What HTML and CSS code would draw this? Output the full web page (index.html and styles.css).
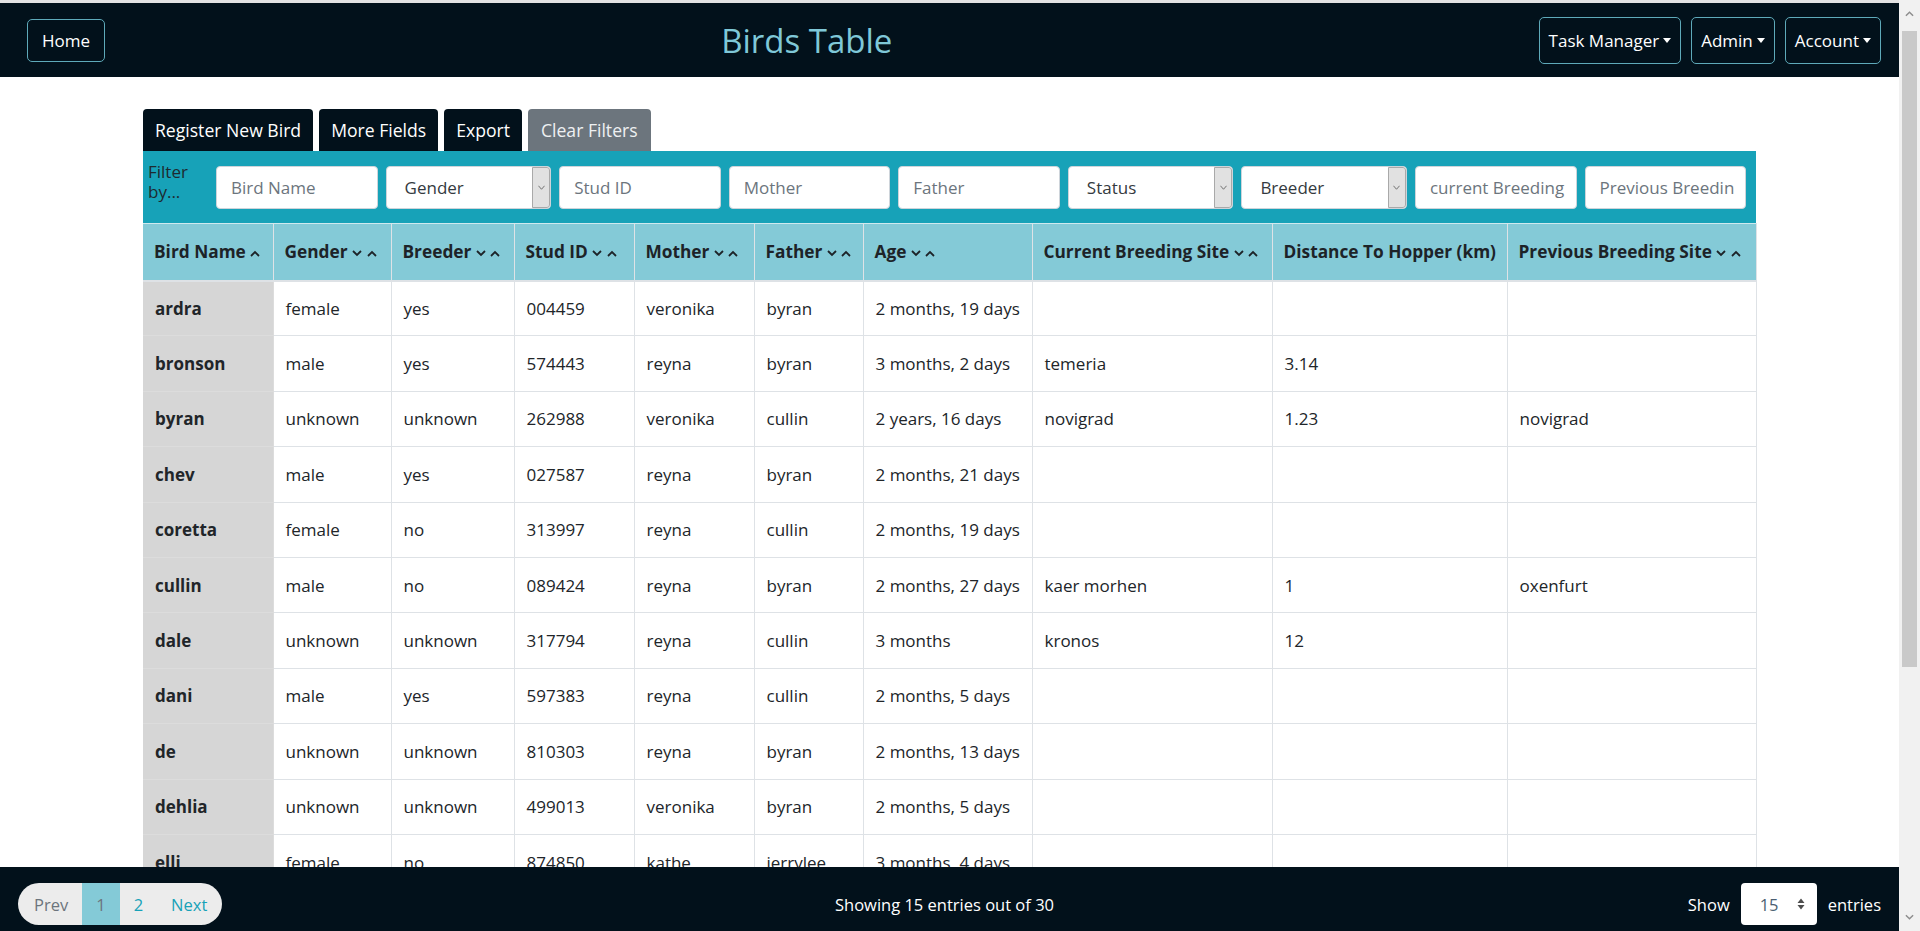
FILE: index.html
```html
<!DOCTYPE html>
<html lang="en">
<head>
<meta charset="utf-8">
<title>Birds Table</title>
<link rel="stylesheet" href="styles.css">
</head>
<body>
<div class="app">
  <div class="viewport">
    <div class="topstrip"></div>
    <nav class="navbar">
      <a class="nav-btn home" href="#">Home</a>
      <h1 class="title">Birds Table</h1>
      <div class="nav-right">
        <button class="nav-btn">Task Manager<span class="caret"></span></button>
        <button class="nav-btn">Admin<span class="caret"></span></button>
        <button class="nav-btn">Account<span class="caret"></span></button>
      </div>
    </nav>

    <main class="content">
      <div class="wrap">
        <div class="actions">
          <button class="act dark">Register New Bird</button>
          <button class="act dark">More Fields</button>
          <button class="act dark">Export</button>
          <button class="act grey">Clear Filters</button>
        </div>

        <div class="filters">
          <div class="filter-label">Filter by...</div>
          <div class="field input"><span class="ph">Bird Name</span></div>
          <div class="field select"><span class="val">Gender</span><span class="arrow"><svg viewBox="0 0 8 5"><path d="M.5.5l3.5 4 3.5-4"/></svg></span></div>
          <div class="field input"><span class="ph">Stud ID</span></div>
          <div class="field input"><span class="ph">Mother</span></div>
          <div class="field input"><span class="ph">Father</span></div>
          <div class="field select"><span class="val">Status</span><span class="arrow"><svg viewBox="0 0 8 5"><path d="M.5.5l3.5 4 3.5-4"/></svg></span></div>
          <div class="field select"><span class="val">Breeder</span><span class="arrow"><svg viewBox="0 0 8 5"><path d="M.5.5l3.5 4 3.5-4"/></svg></span></div>
          <div class="field input"><span class="ph">current Breeding</span></div>
          <div class="field input"><span class="ph">Previous Breedin</span></div>
        </div>

        <table class="birds">
          <colgroup>
            <col class="w-name"><col class="w-gender"><col class="w-breeder"><col class="w-stud"><col class="w-mother"><col class="w-father"><col class="w-age"><col class="w-cur"><col class="w-dist"><col class="w-prev">
          </colgroup>
          <thead>
            <tr>
              <th>Bird Name <svg class="sort" viewBox="0 0 10 7"><path d="M1 6l4-4 4 4"/></svg></th>
              <th>Gender <svg class="sort" viewBox="0 0 10 7"><path d="M1 1l4 4 4-4"/></svg> <svg class="sort" viewBox="0 0 10 7"><path d="M1 6l4-4 4 4"/></svg></th>
              <th>Breeder <svg class="sort" viewBox="0 0 10 7"><path d="M1 1l4 4 4-4"/></svg> <svg class="sort" viewBox="0 0 10 7"><path d="M1 6l4-4 4 4"/></svg></th>
              <th>Stud ID <svg class="sort" viewBox="0 0 10 7"><path d="M1 1l4 4 4-4"/></svg> <svg class="sort" viewBox="0 0 10 7"><path d="M1 6l4-4 4 4"/></svg></th>
              <th>Mother <svg class="sort" viewBox="0 0 10 7"><path d="M1 1l4 4 4-4"/></svg> <svg class="sort" viewBox="0 0 10 7"><path d="M1 6l4-4 4 4"/></svg></th>
              <th>Father <svg class="sort" viewBox="0 0 10 7"><path d="M1 1l4 4 4-4"/></svg> <svg class="sort" viewBox="0 0 10 7"><path d="M1 6l4-4 4 4"/></svg></th>
              <th>Age <svg class="sort" viewBox="0 0 10 7"><path d="M1 1l4 4 4-4"/></svg> <svg class="sort" viewBox="0 0 10 7"><path d="M1 6l4-4 4 4"/></svg></th>
              <th>Current Breeding Site <svg class="sort" viewBox="0 0 10 7"><path d="M1 1l4 4 4-4"/></svg> <svg class="sort" viewBox="0 0 10 7"><path d="M1 6l4-4 4 4"/></svg></th>
              <th>Distance To Hopper (km)</th>
              <th>Previous Breeding Site <svg class="sort" viewBox="0 0 10 7"><path d="M1 1l4 4 4-4"/></svg> <svg class="sort" viewBox="0 0 10 7"><path d="M1 6l4-4 4 4"/></svg></th>
            </tr>
          </thead>
          <tbody>
            <tr><td>ardra</td><td>female</td><td>yes</td><td>004459</td><td>veronika</td><td>byran</td><td>2 months, 19 days</td><td></td><td></td><td></td></tr>
            <tr><td>bronson</td><td>male</td><td>yes</td><td>574443</td><td>reyna</td><td>byran</td><td>3 months, 2 days</td><td>temeria</td><td>3.14</td><td></td></tr>
            <tr><td>byran</td><td>unknown</td><td>unknown</td><td>262988</td><td>veronika</td><td>cullin</td><td>2 years, 16 days</td><td>novigrad</td><td>1.23</td><td>novigrad</td></tr>
            <tr><td>chev</td><td>male</td><td>yes</td><td>027587</td><td>reyna</td><td>byran</td><td>2 months, 21 days</td><td></td><td></td><td></td></tr>
            <tr><td>coretta</td><td>female</td><td>no</td><td>313997</td><td>reyna</td><td>cullin</td><td>2 months, 19 days</td><td></td><td></td><td></td></tr>
            <tr><td>cullin</td><td>male</td><td>no</td><td>089424</td><td>reyna</td><td>byran</td><td>2 months, 27 days</td><td>kaer morhen</td><td>1</td><td>oxenfurt</td></tr>
            <tr><td>dale</td><td>unknown</td><td>unknown</td><td>317794</td><td>reyna</td><td>cullin</td><td>3 months</td><td>kronos</td><td>12</td><td></td></tr>
            <tr><td>dani</td><td>male</td><td>yes</td><td>597383</td><td>reyna</td><td>cullin</td><td>2 months, 5 days</td><td></td><td></td><td></td></tr>
            <tr><td>de</td><td>unknown</td><td>unknown</td><td>810303</td><td>reyna</td><td>byran</td><td>2 months, 13 days</td><td></td><td></td><td></td></tr>
            <tr><td>dehlia</td><td>unknown</td><td>unknown</td><td>499013</td><td>veronika</td><td>byran</td><td>2 months, 5 days</td><td></td><td></td><td></td></tr>
            <tr><td>elli</td><td>female</td><td>no</td><td>874850</td><td>kathe</td><td>jerrylee</td><td>3 months, 4 days</td><td></td><td></td><td></td></tr>
          </tbody>
        </table>
      </div>
    </main>

    <footer class="footer">
      <div class="pager">
        <span class="pg prev">Prev</span>
        <span class="pg active">1</span>
        <span class="pg link">2</span>
        <span class="pg link">Next</span>
      </div>
      <div class="showing">Showing 15 entries out of 30</div>
      <div class="per-page">
        <span>Show</span>
        <div class="num-select"><span class="num">15</span><svg viewBox="0 0 8 12"><path d="M4 0.5L7.5 5h-7z M4 11.5L0.5 7h7z"/></svg></div>
        <span>entries</span>
      </div>
    </footer>
  </div>

  <div class="scrollbar">
    <div class="sb-btn"><svg viewBox="0 0 10 6"><path d="M1 5l4-4 4 4"/></svg></div>
    <div class="sb-track"><div class="sb-thumb"></div></div>
    <div class="sb-btn"><svg viewBox="0 0 10 6"><path d="M1 1l4 4 4-4"/></svg></div>
  </div>
</div>
</body>
</html>
```

FILE: styles.css
```css
* { box-sizing: border-box; }

html, body {
  margin: 0;
  height: 100%;
  overflow: hidden;
}

body {
  font-family: "Open Sans", "Noto Sans", sans-serif;
  font-size: 17px;
  color: #212529;
  background: #fff;
}

.app {
  display: flex;
  height: 931px;
}

.viewport {
  flex: 1;
  display: flex;
  flex-direction: column;
  min-width: 0;
}

.topstrip {
  height: 3px;
  background: #e3e3e3;
  flex: none;
}

/* ---------- navbar ---------- */
.navbar {
  flex: none;
  height: 74px;
  background: #02111b;
  display: flex;
  align-items: center;
  justify-content: space-between;
  padding: 0 18px 0 27px;
}

.nav-btn {
  display: inline-flex;
  align-items: center;
  height: 47px;
  padding: 0 9px 0 9px;
  border: 1px solid #5ea9b9;
  border-radius: 5px;
  background: transparent;
  color: #fff;
  font-family: inherit;
  font-size: 17px;
  text-decoration: none;
}

.nav-btn.home {
  height: 43px;
  width: 78px;
  justify-content: center;
  padding: 0;
}

.caret {
  display: inline-block;
  margin-left: 4px;
  border-top: 5px solid #fff;
  border-left: 4.5px solid transparent;
  border-right: 4.5px solid transparent;
}

.title {
  margin: 0 30px 0 0;
  font-weight: 400;
  font-size: 33px;
  color: #7fc8d8;
}

.nav-right {
  display: flex;
  gap: 10px;
}

/* ---------- content ---------- */
.content {
  flex: 1;
  overflow: hidden;
  min-height: 0;
}

.wrap {
  width: 1613px;
  margin: 32px auto 0;
}

.actions {
  display: flex;
  gap: 6px;
}

.act {
  height: 42px;
  padding: 0 12px;
  border: none;
  border-radius: 4px 4px 0 0;
  font-family: inherit;
  font-size: 17.6px;
  color: #fff;
}

.act.dark { background: #02111b; }
.act.grey { background: #6c757d; color: #eef0f2; padding: 0 13px; }

.filters {
  display: flex;
  align-items: center;
  gap: 8px;
  height: 72px;
  padding: 0 10px 0 5px;
  background: #17a2b8;
}

.filter-label {
  width: 60px;
  flex: none;
  font-size: 17px;
  line-height: 20px;
  color: #1e2a30;
  align-self: flex-start;
  margin-top: 11px;
}

.field {
  flex: 1;
  min-width: 0;
  height: 43px;
  background: #fff;
  border: 1px solid #ced4da;
  border-radius: 4px;
  display: flex;
  align-items: center;
  font-size: 17px;
  white-space: nowrap;
  overflow: hidden;
}

.field.input { padding-left: 14px; }
.ph { color: #6c757d; }

.field.select { padding-left: 18px; }
.val { flex: 1; color: #343a40; }

.arrow {
  flex: none;
  width: 18px;
  height: 100%;
  background: #e1e1e1;
  border: 1px solid #a9a9a9;
  border-radius: 0 3px 3px 0;
  display: flex;
  align-items: center;
  justify-content: center;
}

.arrow svg {
  width: 7px;
  height: 5px;
  fill: none;
  stroke: #555;
  stroke-width: 0.9;
}

/* ---------- table ---------- */
.birds {
  width: 1613px;
  border-collapse: collapse;
  table-layout: fixed;
}

.w-name { width: 130px; }
.w-gender { width: 118px; }
.w-breeder { width: 123px; }
.w-stud { width: 120px; }
.w-mother { width: 120px; }
.w-father { width: 109px; }
.w-age { width: 169px; }
.w-cur { width: 240px; }
.w-dist { width: 235px; }
.w-prev { width: 249px; }

.birds th {
  background: #84cad7;
  height: 57px;
  padding: 0 0 0 11px;
  text-align: left;
  font-weight: 700;
  font-size: 17.3px;
  white-space: nowrap;
  border: 1px solid #dee2e6;
  border-top: 1px solid #cfe9ee;
  border-bottom: 2px solid #dee2e6;
  color: #1d2328;
  overflow: hidden;
}

.sort {
  width: 10px;
  height: 7px;
  fill: none;
  stroke: #1d2328;
  stroke-width: 1.8;
  vertical-align: 1px;
}

.birds td {
  height: 55.4px;
  padding: 0 12px;
  border: 1px solid #dee2e6;
  font-size: 17px;
  white-space: nowrap;
}

.birds td:first-child {
  background: #d6d6d6;
  font-weight: 700;
  border-left: none;
  border-color: #dcdcdc;
}

.birds th:first-child { border-left: none; }

/* ---------- footer ---------- */
.footer {
  flex: none;
  height: 64px;
  background: #02111b;
  display: grid;
  grid-template-columns: 1fr auto 1fr;
  align-items: center;
  padding: 10px 28px 0 18px;
  color: #fff;
  font-size: 16.5px;
}

.pager {
  justify-self: start;
  display: flex;
  height: 42px;
  background: #ececec;
  border-radius: 21px;
  overflow: hidden;
  padding: 0 1px;
}

.pg {
  display: flex;
  align-items: center;
  padding: 0 14px;
  font-size: 16.5px;
}

.pg.prev { color: #6c757d; padding-left: 15px; }
.pg.active { background: #84cad7; color: #6c757d; }
.pg.link { color: #17a2b8; }

.showing { text-align: center; }

.per-page {
  justify-self: end;
  display: flex;
  align-items: center;
  gap: 11px;
  margin-right: -10px;
}

.num-select {
  width: 76px;
  height: 42px;
  background: #fff;
  border-radius: 4px;
  display: flex;
  align-items: center;
  justify-content: space-between;
  padding: 0 12px 0 19px;
  color: #4b5f72;
}

.num-select svg {
  width: 8px;
  height: 12px;
  fill: #4d4d4d;
}

/* ---------- scrollbar ---------- */
.scrollbar {
  flex: none;
  width: 21px;
  background: #f1f1f1;
  display: flex;
  flex-direction: column;
}

.sb-btn {
  height: 28px;
  flex: none;
  display: flex;
  align-items: center;
  justify-content: center;
}

.sb-btn svg {
  width: 9px;
  height: 6px;
  fill: none;
  stroke: #8d8d8d;
  stroke-width: 1.6;
}

.sb-track {
  flex: 1;
  padding: 3px 3px 0;
}

.sb-thumb {
  height: 636px;
  background: #c9c9c9;
}
```
